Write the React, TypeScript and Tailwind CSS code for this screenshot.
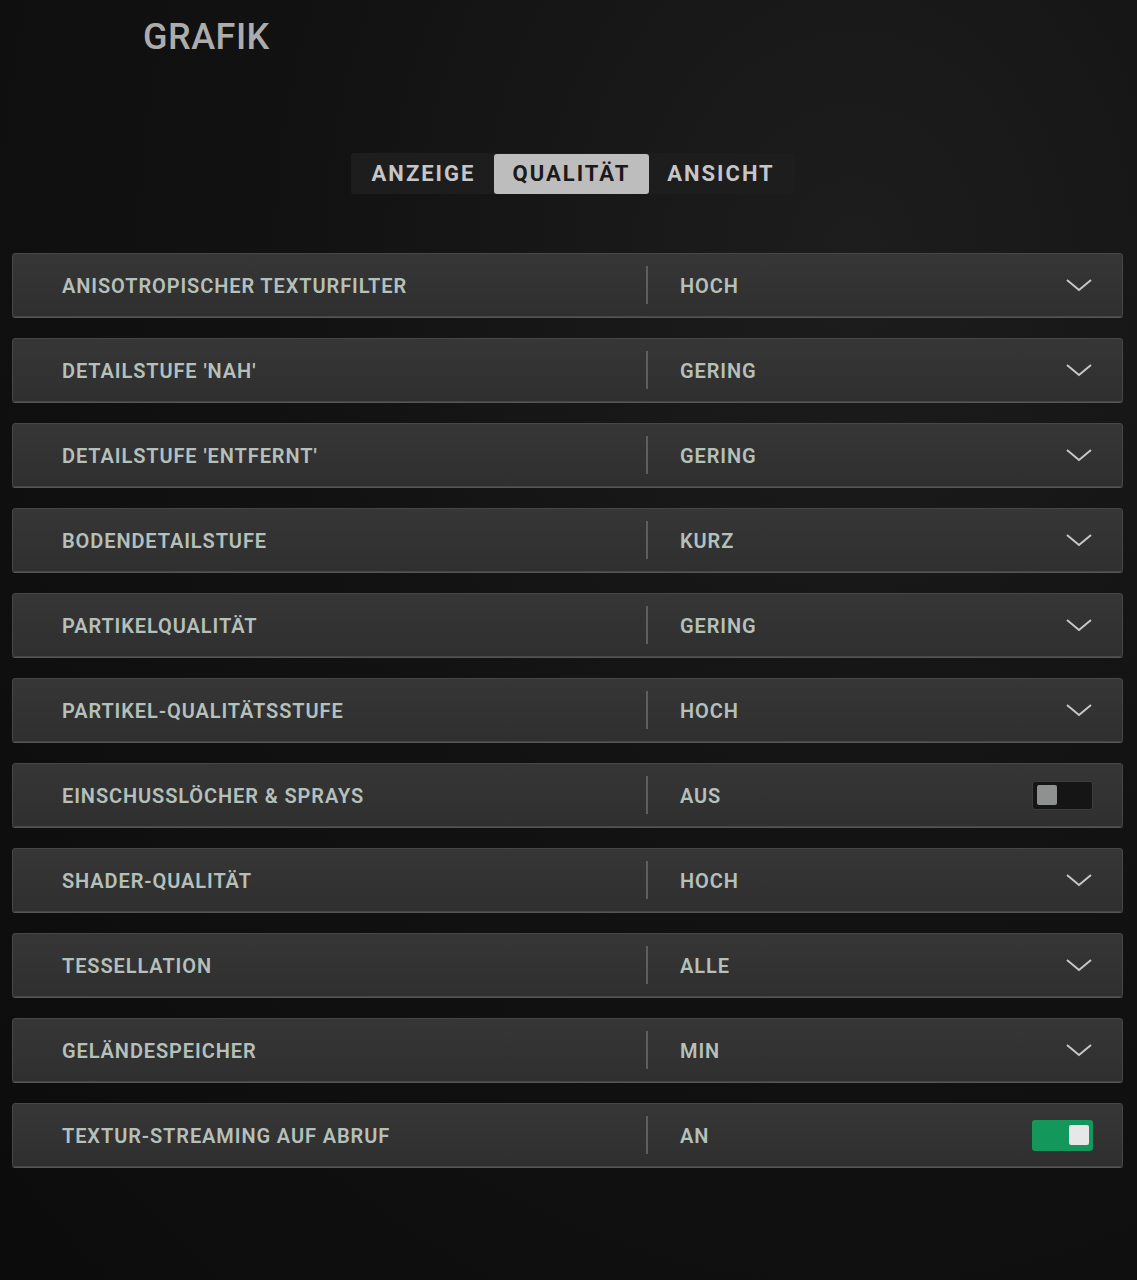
import React from 'react';

type Row = { label: string; value: string; kind: 'select' | 'off' | 'on' };

const rows: Row[] = [
  { label: 'ANISOTROPISCHER TEXTURFILTER', value: 'HOCH', kind: 'select' },
  { label: "DETAILSTUFE 'NAH'", value: 'GERING', kind: 'select' },
  { label: "DETAILSTUFE 'ENTFERNT'", value: 'GERING', kind: 'select' },
  { label: 'BODENDETAILSTUFE', value: 'KURZ', kind: 'select' },
  { label: 'PARTIKELQUALITÄT', value: 'GERING', kind: 'select' },
  { label: 'PARTIKEL-QUALITÄTSSTUFE', value: 'HOCH', kind: 'select' },
  { label: 'EINSCHUSSLÖCHER & SPRAYS', value: 'AUS', kind: 'off' },
  { label: 'SHADER-QUALITÄT', value: 'HOCH', kind: 'select' },
  { label: 'TESSELLATION', value: 'ALLE', kind: 'select' },
  { label: 'GELÄNDESPEICHER', value: 'MIN', kind: 'select' },
  { label: 'TEXTUR-STREAMING AUF ABRUF', value: 'AN', kind: 'on' },
];

const Chevron = () => (
  <svg width="28" height="16" viewBox="0 0 28 16" fill="none">
    <path d="M2 3 L14 13 L26 3" stroke="#c4c8c6" strokeWidth="2" />
  </svg>
);

const Toggle = ({ on }: { on: boolean }) =>
  on ? (
    <div className="w-[61px] h-[31px] rounded-[3px] bg-[#14975a] flex items-center justify-end pr-[4px]">
      <div className="w-[20px] h-[20px] rounded-[2px] bg-[#e6e8e7]" />
    </div>
  ) : (
    <div className="w-[61px] h-[29px] rounded-[3px] bg-[#151515] border border-[#3c3c3c] flex items-center pl-[4px]">
      <div className="w-[20px] h-[20px] rounded-[2px] bg-[#8d918f]" />
    </div>
  );

export default function App() {
  return (
    <div
      className="min-h-[1280px] w-full bg-[#0e0e0e] text-[#b9c2bd] bg-[radial-gradient(ellipse_at_75%_20%,#1d1d1d_0%,#121212_45%,#0c0c0c_100%)]"
      style={{ fontFamily: 'Roboto, "DejaVu Sans", sans-serif' }}
    >
      <div className="pl-[143px] pt-[13px]">
        <h1 className="text-[36px] leading-[48px] font-medium tracking-[0.5px] text-[#acacac]">GRAFIK</h1>
      </div>

      <div className="flex justify-center mt-[92px] pl-[9px]">
        <div className="flex items-center h-[41px] bg-[#1d1d1d] rounded-[2px] px-[2px]">
          <div className="w-[141px] text-center text-[22px] font-bold tracking-[2px] text-[#c6c6c6]">ANZEIGE</div>
          <div className="w-[155px] h-[40px] flex items-center justify-center rounded-[3px] bg-[#bdbdbd] text-[22px] font-bold tracking-[2px] text-[#1a1a1a]">QUALITÄT</div>
          <div className="w-[144px] text-center text-[22px] font-bold tracking-[2px] text-[#c6c6c6]">ANSICHT</div>
        </div>
      </div>

      <div className="mt-[59px] px-[12px] pr-[14px] flex flex-col gap-[21px]">
        {rows.map((r) => (
          <div
            key={r.label}
            className="h-[64px] flex items-center rounded-[3px] border border-[#474747] bg-[linear-gradient(#363636,#2f2f2f)] shadow-[0_1px_0_#555]"
          >
            <div className="w-[633px] pl-[49px] pt-[2px] text-[20px] font-semibold tracking-[0.9px] text-[#b6c0bb]">{r.label}</div>
            <div className="w-[2px] h-[38px] bg-[#5e5e5e]" />
            <div className="flex-1 pl-[32px] pt-[2px] text-[20px] font-semibold tracking-[0.9px] text-[#b6c0bb]">{r.value}</div>
            <div className="pr-[29px] flex items-center">
              {r.kind === 'select' ? <Chevron /> : <Toggle on={r.kind === 'on'} />}
            </div>
          </div>
        ))}
      </div>
    </div>
  );
}
